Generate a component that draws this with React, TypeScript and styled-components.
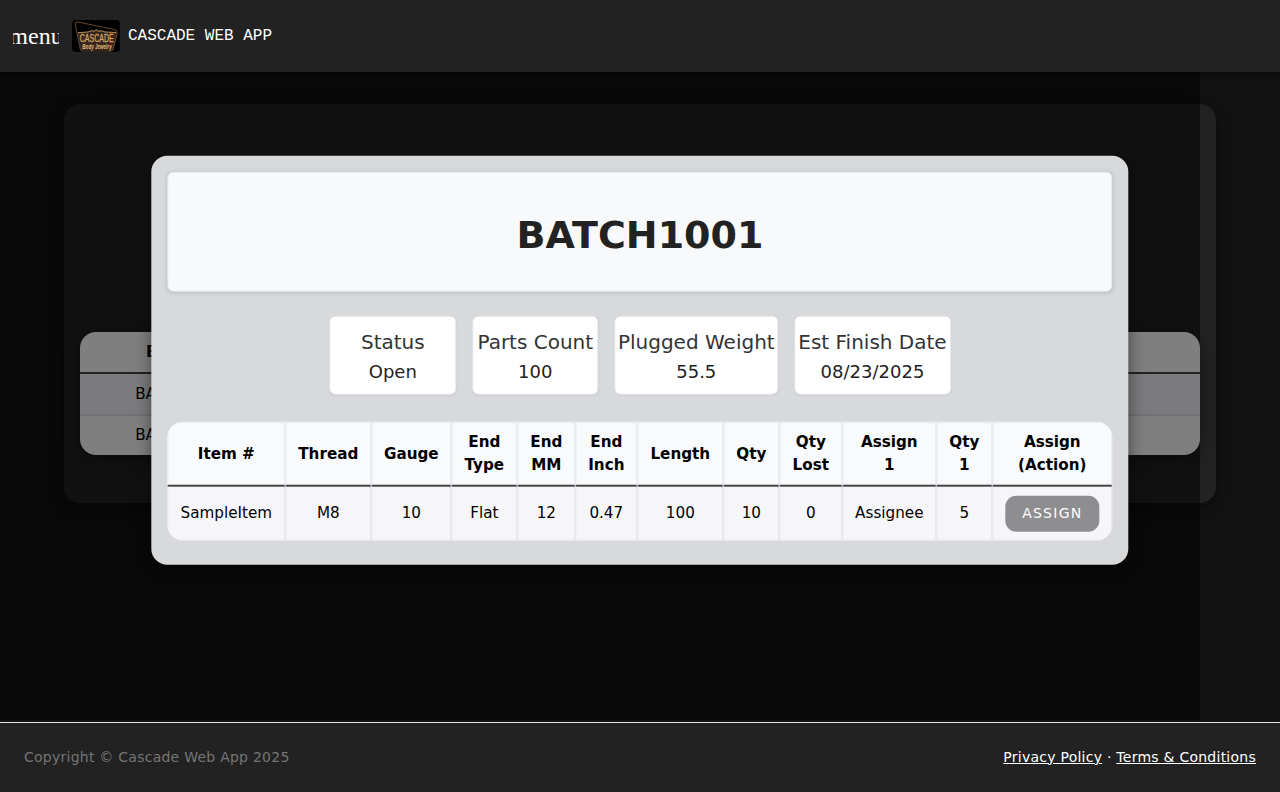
import React from "react";
import styled, { createGlobalStyle } from "styled-components";

const Global = createGlobalStyle`
  *, *::before, *::after { box-sizing: border-box; }
  html, body { margin: 0; height: 100%; overflow: hidden; }
  body { background: #121212; color: #000; font-family: "DejaVu Sans", sans-serif; }
  #root { height: 100%; }
`;

const Page = styled.div`
  display: flex;
  flex-direction: column;
  height: 792px;
`;

const Header = styled.header`
  display: flex;
  align-items: center;
  flex: 0 0 72px;
  padding: 0 12px;
  background: #222;
  box-shadow: 0 2px 6px rgba(0, 0, 0, 0.5);
  z-index: 3;
`;

const MenuButton = styled.button`
  display: flex;
  justify-content: center;
  width: 48px;
  height: 48px;
  align-items: center;
  padding: 0;
  border: 0;
  background: none;
  color: #fff;
  font: 24px/24px "Liberation Serif", serif;
`;

const MenuGlyph = styled.span`
  display: flex;
  justify-content: center;
  width: 46px;
  overflow: hidden;
`;

const Logo = styled.svg`
  margin-left: 12px;
  border-radius: 4px;
`;

const Brand = styled.span`
  margin-left: 8px;
  color: #fff;
  font: 16px/24px "Liberation Mono", monospace;
`;

const Main = styled.main`
  flex: 1;
  min-height: 0;
  padding: 32px 64px;
`;

const Panel = styled.section`
  display: flex;
  flex-direction: column;
  justify-content: flex-end;
  height: 399px;
  padding: 0 16px 48px;
  border-radius: 16px;
  background: #222;
  box-shadow: 0 4px 16px rgba(0, 0, 0, 0.4);
`;

const BatchTable = styled.table`
  width: 100%;
  border-spacing: 0;
  border-radius: 16px;
  overflow: hidden;
  background: #fff;
  box-shadow: 0 4px 16px rgba(0, 0, 0, 0.4);
  font-size: 15.2px;
  line-height: 23px;
  text-align: center;
  th { height: 42px; padding: 0; border-bottom: 2px solid #444; }
  td { height: 39px; padding: 0 0 1px; }
  tbody tr:first-child td { height: 42px; padding: 0; background: #f6f6fa; border-bottom: 2px solid #e2e2e6; }
`;

const Backdrop = styled.div`
  position: absolute;
  top: 72px;
  left: 0;
  width: 1200px;
  height: 648px;
  background: rgba(0, 0, 0, 0.5);
  z-index: 1;
`;

const Dialog = styled.section`
  position: absolute;
  top: 360px;
  left: 640px;
  transform: translate(-50%, -50%);
  width: 977.4px;
  height: 408.6px;
  padding: 16px;
  border-radius: 16px;
  background: #d8d9db;
  box-shadow: 0 4px 16px rgba(0, 0, 0, 0.45);
  z-index: 2;
`;

const Title = styled.h1`
  display: flex;
  align-items: center;
  justify-content: center;
  height: 120px;
  margin: 0 0 24px;
  padding-top: 6px;
  border: 1px solid #e5e7eb;
  border-radius: 6px;
  background: #f8f9fb;
  box-shadow: 0 1px 4px rgba(0, 0, 0, 0.15);
  color: #222;
  font-size: 38px;
  line-height: 48px;
`;

const Stats = styled.div`
  display: flex;
  justify-content: center;
  gap: 15.4px;
  margin-bottom: 27.6px;
`;

const Stat = styled.div<{ $width: number }>`
  width: ${({ $width }) => $width}px;
  height: 78.8px;
  padding-top: 10px;
  border: 1px solid #e5e7eb;
  border-radius: 6px;
  background: #fff;
  box-shadow: 0 1px 2px rgba(0, 0, 0, 0.05);
  text-align: center;
  white-space: nowrap;
`;

const StatLabel = styled.div`
  color: #333;
  font-size: 20px;
  line-height: 30px;
`;

const StatValue = styled.div`
  color: #222;
  font-size: 18px;
  line-height: 29px;
`;

const ItemTable = styled.table`
  width: 945px;
  table-layout: fixed;
  border-spacing: 0;
  border-radius: 16px;
  overflow: hidden;
  background: #f6f6f9;
  font-size: 15.2px;
  line-height: 23px;
  text-align: center;
  th, td { padding: 0; border: 1px solid #e2e6ec; }
  th { height: 65px; background: #f8fafc; border-bottom: 2px solid #444; }
  td { height: 54px; border-top: 0; }
`;

const AssignButton = styled.button`
  display: block;
  width: 94px;
  height: 36px;
  margin: 0 auto;
  padding: 0 0 1px;
  border: 0;
  border-radius: 11px;
  background: #8e8e91;
  color: #fff;
  font: 14px "DejaVu Sans", sans-serif;
  letter-spacing: 1.25px;
`;

const Footer = styled.footer`
  display: flex;
  flex: 0 0 70px;
  align-items: center;
  justify-content: space-between;
  padding: 0 24px 2px;
  border-top: 1px solid #e5e5e5;
  background: #222;
  color: #757575;
  font-size: 14px;
  letter-spacing: 0.25px;
  z-index: 3;
`;

const Links = styled.nav`
  color: #fff;
  a { color: #fff; text-decoration: underline; }
`;

const stats = [
  { label: "Status", value: "Open", width: 127.6 },
  { label: "Parts Count", value: "100", width: 126.6 },
  { label: "Plugged Weight", value: "55.5", width: 164.6 },
  { label: "Est Finish Date", value: "08/23/2025", width: 157 },
];

const columns: { head: string[]; value: string; width: number }[] = [
  { head: ["Item #"], value: "SampleItem", width: 118 },
  { head: ["Thread"], value: "M8", width: 86 },
  { head: ["Gauge"], value: "10", width: 80 },
  { head: ["End", "Type"], value: "Flat", width: 66 },
  { head: ["End", "MM"], value: "12", width: 58 },
  { head: ["End", "Inch"], value: "0.47", width: 62 },
  { head: ["Length"], value: "100", width: 86 },
  { head: ["Qty"], value: "10", width: 56 },
  { head: ["Qty", "Lost"], value: "0", width: 63 },
  { head: ["Assign", "1"], value: "Assignee", width: 94 },
  { head: ["Qty", "1"], value: "5", width: 56 },
  { head: ["Assign", "(Action)"], value: "", width: 120 },
];

function CascadeLogo() {
  return (
    <Logo width="48" height="32" viewBox="0 0 48 32">
      <rect width="48" height="32" fill="#000" />
      <path d="M5 12.500 L17 11.500 L24 9.500 L31 11.500 L45 12 L41 30 L9 30Z" fill="#38241f" />
      <path
        d="M8.500 30 L3.300 4.500 Q3 1.500 6 2 L42 9.500 Q45.500 10 45.200 13 L41 30 Q40.500 31 39 31 L10 31 Q8.700 31 8.500 30Z"
        fill="none"
        stroke="#6b5038"
        strokeWidth="0.900"
      />
      <path d="M6 12.700 L16 12 L20 10.700 L22 11.500 L24 9.800 L27 11.500 L29 10.700 L33 12 L44 12.500" fill="none" stroke="#b58b4a" strokeWidth="1" />
      <text transform="translate(24.700 22.200) scale(0.620 1)" textAnchor="middle" fontFamily="Liberation Sans, sans-serif" fontSize="11.300" fill="#d9ac62" stroke="#d9ac62" strokeWidth="0.250">
        CASCADE
      </text>
      <text transform="translate(25 29) scale(0.700 1)" textAnchor="middle" fontFamily="Liberation Sans, sans-serif" fontStyle="italic" fontWeight="bold" fontSize="6.500" fill="#e8bf78">
        Body Jewelry
      </text>
    </Logo>
  );
}

export default function App() {
  return (
    <>
      <Global />
      <Page>
        <Header>
          <MenuButton>
            <MenuGlyph>menu</MenuGlyph>
          </MenuButton>
          <CascadeLogo />
          <Brand>CASCADE WEB APP</Brand>
        </Header>
        <Main>
          <Panel>
            <BatchTable>
              <colgroup>
                <col style={{ width: 199 }} />
                <col />
              </colgroup>
              <thead>
                <tr><th>Batch #</th><th /></tr>
              </thead>
              <tbody>
                <tr><td>BATCH1001</td><td /></tr>
                <tr><td>BATCH1002</td><td /></tr>
              </tbody>
            </BatchTable>
          </Panel>
        </Main>
        <Footer>
          <span>Copyright © Cascade Web App 2025</span>
          <Links>
            <a href="#privacy">Privacy Policy</a> · <a href="#terms">Terms &amp; Conditions</a>
          </Links>
        </Footer>
      </Page>
      <Backdrop />
      <Dialog>
        <Title>BATCH1001</Title>
        <Stats>
          {stats.map((s) => (
            <Stat key={s.label} $width={s.width}>
              <StatLabel>{s.label}</StatLabel>
              <StatValue>{s.value}</StatValue>
            </Stat>
          ))}
        </Stats>
        <ItemTable>
          <colgroup>
            {columns.map((c, i) => (
              <col key={i} style={{ width: c.width }} />
            ))}
          </colgroup>
          <thead>
            <tr>
              {columns.map((c, i) => (
                <th key={i}>
                  {c.head.map((line) => (
                    <div key={line}>{line}</div>
                  ))}
                </th>
              ))}
            </tr>
          </thead>
          <tbody>
            <tr>
              {columns.map((c, i) => (
                <td key={i}>{c.value || <AssignButton>ASSIGN</AssignButton>}</td>
              ))}
            </tr>
          </tbody>
        </ItemTable>
      </Dialog>
    </>
  );
}
